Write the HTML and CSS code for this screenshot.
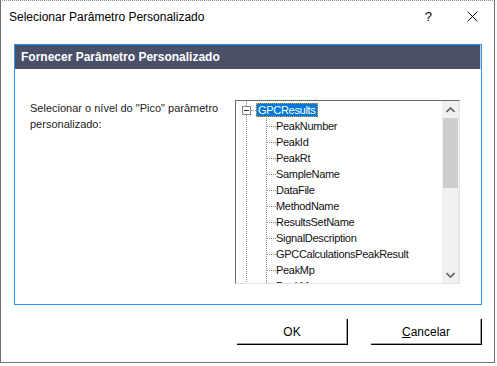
FILE: index.html
```html
<!DOCTYPE html>
<html lang="pt">
<head>
  <meta charset="UTF-8">
  <title>Selecionar Parâmetro Personalizado</title>
  <link rel="stylesheet" href="styles.css">
</head>
<body>
  <div class="window">
    <div class="titlebar">
      <span class="title">Selecionar Parâmetro Personalizado</span>
      <span class="help">?</span>
      <svg class="close" width="11" height="11" viewBox="0 0 11 11">
        <path d="M0.5 0.5 L10.5 10.5 M10.5 0.5 L0.5 10.5" stroke="#111" stroke-width="1" fill="none"/>
      </svg>
    </div>

    <div class="panel">
      <div class="panel-header">Fornecer Parâmetro Personalizado</div>
      <div class="panel-body">
        <div class="label">Selecionar o nível do "Pico" parâmetro<br>personalizado:</div>

        <div class="tree-box">
          <div class="tree">
            <div class="root-row">
              <span class="expander"></span>
              <span class="root-link"></span>
              <span class="node selected">GPCResults</span>
            </div>
            <div class="children">
              <div class="child"><span class="link"></span><span class="node">PeakNumber</span></div>
              <div class="child"><span class="link"></span><span class="node">PeakId</span></div>
              <div class="child"><span class="link"></span><span class="node">PeakRt</span></div>
              <div class="child"><span class="link"></span><span class="node">SampleName</span></div>
              <div class="child"><span class="link"></span><span class="node">DataFile</span></div>
              <div class="child"><span class="link"></span><span class="node">MethodName</span></div>
              <div class="child"><span class="link"></span><span class="node">ResultsSetName</span></div>
              <div class="child"><span class="link"></span><span class="node">SignalDescription</span></div>
              <div class="child"><span class="link"></span><span class="node">GPCCalculationsPeakResult</span></div>
              <div class="child"><span class="link"></span><span class="node">PeakMp</span></div>
              <div class="child"><span class="link"></span><span class="node">PeakMn</span></div>
            </div>
          </div>
          <div class="scrollbar">
            <svg class="arrow" width="9" height="6" viewBox="0 0 9 6"><path d="M0.5 5 L4.5 1 L8.5 5" stroke="#606060" stroke-width="1.6" fill="none"/></svg>
            <div class="track"><div class="thumb"></div></div>
            <svg class="arrow" width="9" height="6" viewBox="0 0 9 6"><path d="M0.5 1 L4.5 5 L8.5 1" stroke="#606060" stroke-width="1.6" fill="none"/></svg>
          </div>
        </div>
      </div>
    </div>

    <div class="buttons">
      <button class="btn">OK</button>
      <button class="btn"><u>C</u>ancelar</button>
    </div>
  </div>
</body>
</html>
```

FILE: styles.css
```css
* { box-sizing: border-box; }

body {
  margin: 0;
  background: #fff;
  font-family: 'Liberation Sans', Arial, sans-serif;
  color: #000;
}

.window {
  width: 495px;
  height: 363px;
  border-left: 1px solid #707070;
  border-right: 1px solid #707070;
  border-bottom: 1px solid #707070;
  border-top: 1px dotted #8a8a8a;
  box-shadow: 0 2px 0 #a6cdf2;
  background: #fff;
}

.titlebar {
  height: 31px;
  display: flex;
  align-items: center;
  padding-left: 8px;
  font-size: 12px;
}

.title { flex: 1; padding-top: 1px; }

.help {
  font-size: 13px;
  margin-right: 35px;
}

.close { margin-right: 16px; }

.panel {
  margin: 12px 0 0 13px;
  width: 468px;
  height: 261px;
  border: 1px solid #2b93f5;
}

.panel-header {
  height: 24px;
  background: #4b5069;
  border-right: 1px solid #c9cbd2;
  color: #fff;
  font-weight: bold;
  font-size: 12px;
  line-height: 24px;
  padding-left: 6px;
}

.panel-body {
  display: flex;
  padding: 31px 0 0 15px;
}

.label {
  width: 205px;
  font-size: 11px;
  line-height: 16px;
  color: #222;
}

.tree-box {
  display: flex;
  width: 225px;
  height: 184px;
  border-top: 1px solid #6a6a6a;
  border-left: 1px solid #6a6a6a;
  border-bottom: 1px solid #e3e3e3;
  border-right: 1px solid #e3e3e3;
  overflow: hidden;
}

.tree {
  flex: 1;
  padding: 1px 0 0 6px;
  font-size: 11px;
  letter-spacing: -0.3px;
  background: linear-gradient(#888 50%, transparent 50%) 10px 14px / 1px 2px repeat-y;
}

.root-row, .child {
  display: flex;
  align-items: center;
  height: 16px;
}

.expander {
  width: 9px;
  height: 9px;
  border: 1px solid #888;
  background: #fff linear-gradient(#333, #333) center / 5px 1px no-repeat;
}

.root-link {
  width: 5px;
  border-top: 1px dotted #888;
}

.node {
  padding: 0 2px;
  line-height: 14px;
  color: #111;
}

.child .node { padding: 0; }

.selected {
  background: #0078d7;
  color: #fff;
  outline: 1px dotted #e8a13a;
  outline-offset: -1px;
}

.children {
  margin-left: 24px;
  background: linear-gradient(#888 50%, transparent 50%) 0 0 / 1px 2px repeat-y;
}

.link {
  width: 9px;
  margin-left: 1px;
  border-top: 1px dotted #888;
}

.scrollbar {
  width: 17px;
  background: #f0f0f0;
  display: flex;
  flex-direction: column;
  align-items: center;
  padding: 6px 0 5px;
}

.track {
  flex: 1;
  width: 15px;
  padding: 5px 0;
}

.thumb {
  height: 70px;
  background: #cdcdcd;
}

.buttons {
  display: flex;
  gap: 23px;
  margin: 14px 0 0 236px;
}

.btn {
  width: 111px;
  height: 26px;
  border: none;
  border-right: 1px solid #000;
  border-bottom: 1px solid #000;
  box-shadow: inset -1px -1px 0 #a0a0a0;
  background: #fff;
  font-family: 'Liberation Sans', Arial, sans-serif;
  font-size: 12px;
  color: #000;
  padding: 0;
}
```
